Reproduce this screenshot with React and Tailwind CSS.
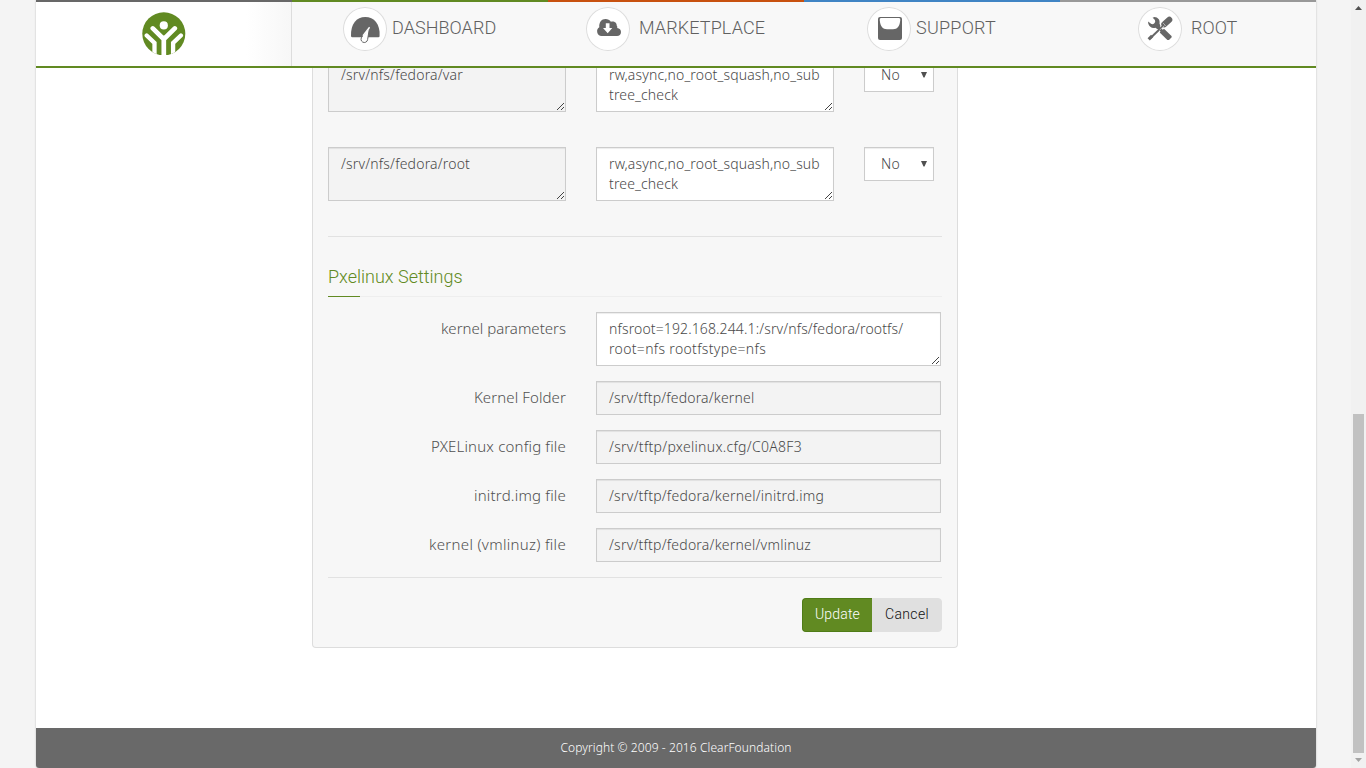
import React from "react";

function Logo() {
  return (
    <svg width="44" height="44" viewBox="0 0 44 44">
      <defs>
        <clipPath id="disc">
          <circle cx="21.8" cy="21.8" r="21.5" />
        </clipPath>
      </defs>
      <g clipPath="url(#disc)">
        <rect width="44" height="43" fill="#618a22" />
        <circle cx="21.8" cy="13.4" r="4.1" fill="#fff" />
        <g fill="none" stroke="#fff" strokeWidth="4.7" strokeLinecap="round">
          <path d="M10.8 16.4 21.8 27.2 32.8 16.4M21.8 26V48" />
          <path d="M4.7 23.5 12.5 31V48M38.9 23.5 31.1 31V48" strokeWidth="4.3" />
        </g>
      </g>
    </svg>
  );
}

function DashboardIcon() {
  return (
    <svg width="44" height="44" viewBox="0 0 44 44">
      <path d="M8 29C7.500 17 13.500 10 22.300 10S37.300 17 36.600 29Q36.500 30.200 35.300 30.200H9.300Q8.100 30.200 8 29Z" fill="#666" />
      <path d="M26.600 20.200 19.300 29.600A3.300 3.300 0 1 0 24.600 32.600Z" fill="#fff" stroke="#666" strokeWidth="1" />
      <path d="M26.600 20.200 20 28.700" stroke="#fff" strokeWidth="1.400" />
    </svg>
  );
}

function CloudIcon() {
  return (
    <svg width="44" height="44" viewBox="0 0 44 44">
      <path d="M15.500 29A4.800 4.800 0 0 1 13.300 20.200C12.900 15.500 15.500 12 19.500 12C21.800 12 23.700 13 24.900 14.800C27.500 13.700 31 15.300 30.700 18.600C31.500 19.500 31.300 20.500 31.200 21C33.600 21.300 35 22.900 35 25C35 27.400 33.400 29 31 29Z" fill="#666" />
      <path d="M19.800 16.300H23.500V21H26.300L21.700 26.200L17 21H19.800Z" fill="#fff" />
    </svg>
  );
}

function SupportIcon() {
  return (
    <svg width="44" height="44" viewBox="0 0 44 44">
      <rect x="11" y="10" width="24" height="23" rx="2" fill="#666" />
      <path d="M14 11H32Q33.500 11 33.300 13C32.600 19.500 30.500 22.200 26 22.200H20C15.500 22.200 13.400 19.500 12.700 13Q12.500 11 14 11Z" fill="#fff" />
    </svg>
  );
}

function ToolsIcon() {
  return (
    <svg width="44" height="44" viewBox="0 0 44 44">
      <g fill="none" stroke="#666">
        <path d="M26.300 17.300 31.300 12.800" strokeWidth="6" strokeLinecap="round" />
        <path d="M12 31.500 25 19" strokeWidth="2" />
        <path d="M10.700 32.300 14.200 28.800" strokeWidth="3.200" />
        <path d="M19 19.300 25 25" strokeWidth="3" />
      </g>
      <path d="M10.300 16.800 10 14.500 13.400 17C15.300 17.600 17.300 16 17.200 14.200C17 12.400 15.800 11.800 14.600 10.700L16.400 10.100C19.800 10.300 22.300 12.900 21.500 16.600L22.500 19.200 19.600 22.300 17.500 20.700C14.200 21.600 11.300 20.200 10.300 16.800Z" fill="#666" />
      <path d="M21.700 25.600 26 21.800 33.500 29Q34 29.700 33.400 30.500L31 32.900Q30.200 33.300 29.400 32.900Z" fill="#666" />
      <path d="M21.200 23.600 26.500 18.600M24.800 15.800 27.800 18.800" stroke="#fff" strokeWidth=".5" />
    </svg>
  );
}

function NavItem({ icon, label, bar, inset, gap, spacing }) {
  return (
    <a className={`flex h-[66px] w-64 items-start border-t-2 bg-[#f8f8f8] pt-[5px] ${bar} ${inset}`}>
      <span className="flex h-11 w-11 shrink-0 rounded-full bg-white shadow-[inset_0_0_0_1px_#ddd]">
        {icon}
      </span>
      <span className={`pt-[7px] font-['Roboto',sans-serif] text-[18px] leading-7 font-light whitespace-nowrap text-[#606060] ${gap} ${spacing}`}>
        {label}
      </span>
    </a>
  );
}

function Grip() {
  return (
    <svg className="absolute right-0 bottom-[1px]" width="8" height="8" viewBox="0 0 8 8" shapeRendering="crispEdges">
      {[0, 1, 2, 3, 4, 5, 6].map((i) => (
        <rect key={i} x={i} y={7 - i} width="1" height="1" fill="#444" />
      ))}
      {[4, 5, 6].map((i) => (
        <rect key={"s" + i} x={i} y={11 - i} width="1" height="1" fill="#444" />
      ))}
    </svg>
  );
}

const fieldBase =
  "border border-[#ccc] pt-[6px] text-[14px] leading-5 font-light whitespace-nowrap text-[#484848] shadow-[inset_0_1px_1px_rgba(0,0,0,0.075)]";

function Area({ lines, width, disabled }) {
  return (
    <div className={`relative h-[54px] shrink-0 px-3 ${fieldBase} ${width} ${disabled ? "bg-[#f3f3f3]" : "bg-white"}`}>
      {lines.map(([text, spacing]) => (
        <div key={text} className={spacing}>{text}</div>
      ))}
      <Grip />
    </div>
  );
}

function Select() {
  return (
    <div className={`flex h-[34px] w-[70px] justify-between bg-white pr-[6px] pl-4 ${fieldBase}`}>
      <span className="tracking-[0.27px]">No</span>
      <svg className="mt-[7px]" width="6" height="6" viewBox="0 0 6 6">
        <path d="M0 0H6L3.500 5.500H2.500Z" fill="#505050" />
      </svg>
    </div>
  );
}

function ExportRow({ path, spacing }) {
  return (
    <div className="mb-[35px] flex items-start gap-[30px]">
      <Area width="w-[238px]" disabled lines={[[path, spacing]]} />
      <Area
        width="w-[238px]"
        lines={[["rw,async,no_root_squash,no_sub", "tracking-[0.14px]"], ["tree_check", "tracking-[0.15px]"]]}
      />
      <Select />
    </div>
  );
}

function Field({ label, labelSpacing, children }) {
  return (
    <div className="mb-[15px] flex items-start gap-[30px]">
      <div className={`w-[238px] shrink-0 pt-[6px] text-right text-[15px] leading-5 font-light text-[#505050] ${labelSpacing}`}>
        {label}
      </div>
      {children}
    </div>
  );
}

function Input({ value, spacing }) {
  return <div className={`h-[34px] w-[345px] bg-[#f3f3f3] px-3 ${fieldBase} ${spacing}`}>{value}</div>;
}

export default function App() {
  return (
    <div className="flex h-screen overflow-hidden bg-[#f4f4f4] pl-9 font-['Noto_Sans',sans-serif]">
      <div className="flex w-[1280px] flex-col rounded-b-[3px] bg-white shadow-[0_0_2px_rgba(0,0,0,0.25)]">
        <header className="z-10 flex h-[68px] shrink-0 border-b-2 border-[#618a22]">
          <div className="flex h-[66px] w-64 justify-center border-t-2 border-t-[#686868] bg-linear-to-r from-white from-82% to-[#f7f7f7] pt-[10px] shadow-[inset_-1px_0_0_#ddd]">
            <Logo />
          </div>
          <NavItem icon={<DashboardIcon />} label="DASHBOARD" bar="border-[#618a22]" inset="pl-[51px]" gap="pl-[5px]" spacing="tracking-[0.05px]" />
          <NavItem icon={<CloudIcon />} label="MARKETPLACE" bar="border-[#c8510f]" inset="pl-[38px]" gap="pl-[9px]" spacing="tracking-[0.12px]" />
          <NavItem icon={<SupportIcon />} label="SUPPORT" bar="border-[#4084c4]" inset="pl-[63px]" gap="pl-[5px]" spacing="tracking-[0.25px]" />
          <NavItem icon={<ToolsIcon />} label="ROOT" bar="border-[#999]" inset="pl-[78px]" gap="pl-[9px]" spacing="tracking-[0px]" />
        </header>

        <main className="flex min-h-0 flex-1 flex-col overflow-hidden">
          <section className="-mt-[10px] ml-[276px] h-[590px] w-[646px] rounded-b-[4px] border border-t-0 border-[#ddd] bg-[#f7f7f7] px-[15px]">
            <ExportRow path="/srv/nfs/fedora/var" spacing="tracking-[0.19px]" />
            <ExportRow path="/srv/nfs/fedora/root" spacing="tracking-[0.19px]" />
            <hr className="border-[#e2e2e2]" />
            <h3 className="mt-6 h-[36px] border-b border-[#eee] pt-[2px] font-['Roboto',sans-serif] text-[18px] leading-7 font-light text-[#618a22]">
              Pxelinux Settings
            </h3>
            <div className="-mt-px mb-[15px] h-px w-8 bg-[#618a22]" />
            <Field label="kernel parameters" labelSpacing="tracking-[0.01px]">
              <Area
                width="w-[345px]"
                lines={[
                  ["nfsroot=192.168.244.1:/srv/nfs/fedora/rootfs/", "tracking-[0.13px]"],
                  ["root=nfs rootfstype=nfs", "tracking-[0.33px]"],
                ]}
              />
            </Field>
            <Field label="Kernel Folder" labelSpacing="tracking-[0.1px]">
              <Input value="/srv/tftp/fedora/kernel" spacing="tracking-[0.18px]" />
            </Field>
            <Field label="PXELinux config file" labelSpacing="tracking-[0.18px]">
              <Input value="/srv/tftp/pxelinux.cfg/C0A8F3" spacing="tracking-[0.3px]" />
            </Field>
            <Field label="initrd.img file" labelSpacing="tracking-[0.2px]">
              <Input value="/srv/tftp/fedora/kernel/initrd.img" spacing="tracking-[0.24px]" />
            </Field>
            <Field label="kernel (vmlinuz) file" labelSpacing="tracking-[0.3px]">
              <Input value="/srv/tftp/fedora/kernel/vmlinuz" spacing="tracking-[0.23px]" />
            </Field>
            <hr className="border-[#e2e2e2]" />
            <div className="mt-5 flex justify-end font-['Roboto',sans-serif] text-[14px] leading-[30px]">
              <button className="flex h-[34px] w-[70px] justify-center rounded-l-[4px] border border-r-0 border-[#4f7c17] bg-[#618a22] font-light tracking-[0.17px] text-white">
                Update
              </button>
              <button className="flex h-[34px] w-[70px] justify-center rounded-r-[4px] border border-[#e0e0e0] bg-[#e0e0e0] font-light tracking-[0.35px] text-[#111]">
                Cancel
              </button>
            </div>
          </section>
        </main>

        <footer className="flex h-10 shrink-0 items-center justify-center rounded-b-[3px] bg-[#696969] text-[12px] tracking-[0.09px] text-white">
          <span className="font-light">Copyright © 2009 - 2016 ClearFoundation</span>
        </footer>
      </div>

      <div className="ml-auto flex w-[15px] flex-col items-center bg-[#f1f1f1]">
        <svg className="mt-[6px]" width="7" height="4" viewBox="0 0 7 4">
          <path d="M0 4 3.500 0 7 4Z" fill="#505050" />
        </svg>
        <div className="mt-[404px] h-[339px] w-[11px] bg-[#c1c1c1]" />
        <svg className="mt-[5px]" width="7" height="4" viewBox="0 0 7 4">
          <path d="M0 0 3.500 4 7 0Z" fill="#a3a3a3" />
        </svg>
      </div>
    </div>
  );
}
